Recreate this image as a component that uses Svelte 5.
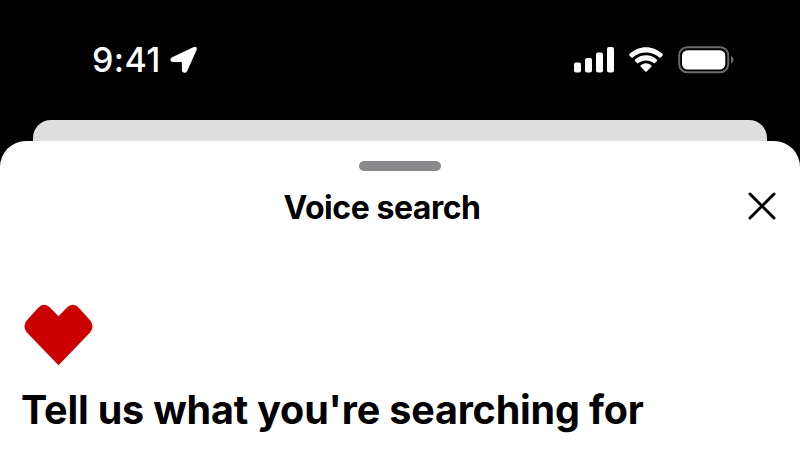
<script>
  const title = 'Voice search';
  const prompt = "Tell us what you're searching for";
</script>

<main class="screen">
  <header class="status">
    <div class="clock">
      <span class="time">9:41</span>
      <svg class="location" width="28" height="28" viewBox="0 0 28 28" aria-hidden="true">
        <path d="M2.2 11.2 23.2 1.2Q27.8-.2 26.5 4.2L17.2 25Q16.2 27.1 14.2 26.8 12 26.4 11.9 24.5V17Q11.9 16 10.9 16H3Q.7 15.9.4 14.1 .2 12.2 2.2 11.2Z" />
      </svg>
    </div>
    <div class="indicators">
      <svg width="40" height="26" viewBox="0 0 40 26" aria-hidden="true">
        <rect x="0" y="15.5" width="7" height="10" rx="2" />
        <rect x="11" y="11" width="7" height="14.5" rx="2" />
        <rect x="22" y="5.5" width="7" height="20" rx="2" />
        <rect x="33" y="0" width="7" height="25.5" rx="2" />
      </svg>
      <svg class="wifi" width="34" height="26" viewBox="0 0 34 26" aria-hidden="true">
        <path d="M.4 7.1C9.7-2.2 24.3-2.2 33.6 7.1Q34.3 7.8 33.6 8.5L31.6 10.4Q31 11 30.3 10.4C22.7 3.9 11.3 3.9 3.7 10.4Q3 11 2.4 10.4L.4 8.5Q-.3 7.8.4 7.1Z" />
        <path d="M6 12.7C12.2 6.9 21.8 6.9 28 12.7Q28.7 13.4 28 14.1L26 16Q25.4 16.6 24.7 16C20.3 12.5 13.7 12.5 9.3 16Q8.6 16.6 8 16L6 14.1Q5.3 13.4 6 12.7Z" />
        <path d="M11.7 18.3Q17 14.3 22.3 18.3Q23 19 22.3 19.8L17.7 24.5Q17 25.2 16.3 24.5L11.7 19.8Q11 19 11.7 18.3Z" />
      </svg>
      <svg class="battery" width="57" height="28" viewBox="0 0 57 28" aria-hidden="true">
        <rect x="1.2" y="1.2" width="49" height="25.1" rx="8" fill="none" stroke="#6b6b6b" stroke-width="1.9" />
        <rect x="4" y="4.2" width="43.3" height="19.3" rx="5.5" />
        <path d="M53 9.9Q55.6 11.2 55.6 13.7T53 17.5Z" fill="#6b6b6b" />
      </svg>
    </div>
  </header>

  <div class="backdrop"></div>

  <section class="sheet">
    <div class="handle"></div>
    <div class="titlebar">
      <h1>{title}</h1>
      <button aria-label="Close">
        <svg width="28" height="28" viewBox="0 0 28 28" aria-hidden="true">
          <path d="M2 2 26 26M26 2 2 26" fill="none" stroke="#000" stroke-width="3" stroke-linecap="round" />
        </svg>
      </button>
    </div>
    <svg class="heart" width="70" height="62" viewBox="0 0 70 62" aria-hidden="true">
      <path d="M34.5 61.3 2.9 28.4Q-1.9 22.7 2.7 16.6L13.8 4.2Q19.4-1.8 25.4 2.9L34.5 12.2 43.6 2.9Q49.6-1.8 55.2 4.2L66.3 16.6Q70.9 22.7 66.1 28.4Z" fill="#cc0000" />
    </svg>
    <h2>{prompt}</h2>
  </section>
</main>

<style>
  :global(body) { margin: 0; }
  .screen {
    width: 800px;
    height: 450px;
    overflow: hidden;
    background: #000;
    font-family: Inter, "Liberation Sans", sans-serif;
  }
  svg { display: block; flex: none; }
  .status {
    box-sizing: border-box;
    height: 120px;
    padding: 0 65px 0 92px;
    display: flex;
    justify-content: space-between;
    align-items: center;
    color: #fff;
  }
  .status svg { fill: #fff; }
  .clock, .indicators { display: flex; align-items: center; }
  .clock { gap: 8px; }
  .time {
    width: 70px;
    font-size: 34px;
    line-height: 40px;
    font-weight: 550;
    letter-spacing: 0.4px;
    white-space: nowrap;
  }
  .wifi { margin-left: 15px; }
  .battery { margin-left: 15px; }
  .backdrop {
    height: 20.5px;
    margin: 0 33px;
    border-radius: 18px 18px 0 0;
    background: #dfdfdf;
  }
  .sheet {
    box-sizing: border-box;
    height: 310px;
    padding: 20.5px 22px 0 21px;
    border-radius: 26px 26px 0 0;
    background: #fff;
    color: #000;
  }
  .handle {
    width: 82px;
    height: 10px;
    margin: 0 auto;
    border-radius: 5px;
    background: #8a8a8d;
  }
  .titlebar {
    display: grid;
    grid-template-columns: 1fr 32px;
    align-items: center;
    height: 40px;
    margin: 15px 2px 0 0;
  }
  h1 {
    margin: 0;
    padding: 3px 1px 0 0;
    text-align: center;
    font-size: 32px;
    line-height: 37px;
    font-weight: 650;
    letter-spacing: -0.45px;
    white-space: nowrap;
  }
  button {
    border: 0;
    padding: 0 0 0 4px;
    background: none;
  }
  .heart { margin: 77.5px 0 0 3px; }
  h2 {
    margin: 19.5px 0 0;
    font-size: 39.5px;
    line-height: 50px;
    font-weight: 700;
    letter-spacing: -0.18px;
    white-space: nowrap;
  }
</style>
